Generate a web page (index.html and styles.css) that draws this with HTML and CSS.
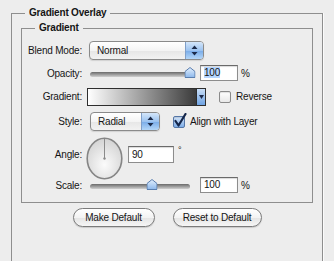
FILE: index.html
```html
<!DOCTYPE html>
<html lang="en">
<head>
  <meta charset="UTF-8">
  <title>Gradient Overlay</title>
  <link rel="stylesheet" href="styles.css">
</head>
<body>
  <fieldset class="group">
    <legend class="group-title">Gradient Overlay</legend>

    <fieldset class="panel">
      <legend class="panel-title">Gradient</legend>

      <div class="row row-blend">
        <span class="label">Blend Mode:</span>
        <div class="select select-blend">
          <span class="select-text">Normal</span>
          <span class="stepper">
            <svg width="7" height="11" viewBox="0 0 7 11"><path d="M3.5 0.5 L6.5 4 L0.5 4 Z M0.5 7 L6.5 7 L3.5 10.5 Z" fill="#1c2b4a"/></svg>
          </span>
        </div>
      </div>

      <div class="row row-opacity">
        <span class="label">Opacity:</span>
        <div class="slider">
          <div class="track"></div>
          <svg class="thumb" style="left: 100%" width="11" height="11" viewBox="0 0 11 11">
            <defs>
              <linearGradient id="th1" x1="0" y1="0" x2="0" y2="1">
                <stop offset="0" stop-color="#e4f0fd"/>
                <stop offset="1" stop-color="#8cb8ec"/>
              </linearGradient>
            </defs>
            <path d="M5.5 0.5 L10.5 4.5 L10.5 10.5 L0.5 10.5 L0.5 4.5 Z" fill="url(#th1)" stroke="#5a7eae"/>
          </svg>
        </div>
        <div class="field"><span class="picked">100</span></div>
        <span class="unit">%</span>
      </div>

      <div class="row row-gradient">
        <span class="label">Gradient:</span>
        <div class="ramp-box">
          <div class="ramp"></div>
          <div class="ramp-arrow">
            <svg width="5" height="4" viewBox="0 0 5 4"><path d="M0 0 L5 0 L2.5 4 Z" fill="#1c2b4a"/></svg>
          </div>
        </div>
        <span class="check check-reverse"></span>
        <span class="check-text">Reverse</span>
      </div>

      <div class="row row-style">
        <span class="label">Style:</span>
        <div class="select select-style">
          <span class="select-text">Radial</span>
          <span class="stepper">
            <svg width="7" height="11" viewBox="0 0 7 11"><path d="M3.5 0.5 L6.5 4 L0.5 4 Z M0.5 7 L6.5 7 L3.5 10.5 Z" fill="#1c2b4a"/></svg>
          </span>
        </div>
        <span class="check check-on">
          <svg class="tick" width="14" height="15" viewBox="0 0 14 15"><path d="M2.5 8 L5.5 12.5 L12.5 1" fill="none" stroke="#15264a" stroke-width="2.2" stroke-linecap="round" stroke-linejoin="round"/></svg>
        </span>
        <span class="check-text">Align with Layer</span>
      </div>

      <div class="row row-angle">
        <span class="label">Angle:</span>
        <svg class="dial" width="37" height="43" viewBox="0 0 37 43">
          <defs>
            <radialGradient id="dg" cx="0.5" cy="0.65" r="0.6">
              <stop offset="0" stop-color="#fbfbfb"/>
              <stop offset="1" stop-color="#d6d6d6"/>
            </radialGradient>
          </defs>
          <ellipse cx="18.5" cy="21.5" rx="17.3" ry="20.3" fill="url(#dg)" stroke="#858585" stroke-width="1.6"/>
          <line x1="18.5" y1="21.5" x2="18.5" y2="2" stroke="#8a8a8a" stroke-width="1"/>
          <circle cx="18.5" cy="21.5" r="1.2" fill="#8a8a8a"/>
        </svg>
        <div class="field field-angle">90</div>
        <span class="degree">°</span>
      </div>

      <div class="row row-scale">
        <span class="label">Scale:</span>
        <div class="slider">
          <div class="track"></div>
          <svg class="thumb" style="left: 62%" width="11" height="11" viewBox="0 0 11 11">
            <defs>
              <linearGradient id="th2" x1="0" y1="0" x2="0" y2="1">
                <stop offset="0" stop-color="#e4f0fd"/>
                <stop offset="1" stop-color="#8cb8ec"/>
              </linearGradient>
            </defs>
            <path d="M5.5 0.5 L10.5 4.5 L10.5 10.5 L0.5 10.5 L0.5 4.5 Z" fill="url(#th2)" stroke="#5a7eae"/>
          </svg>
        </div>
        <div class="field">100</div>
        <span class="unit">%</span>
      </div>
    </fieldset>

    <div class="buttons">
      <button class="pill pill-make">Make Default</button>
      <button class="pill pill-reset">Reset to Default</button>
    </div>
  </fieldset>
</body>
</html>
```

FILE: styles.css
```css
html, body {
  height: 261px;
  overflow: hidden;
}

body {
  margin: 0;
  padding-top: 7px;
  box-sizing: border-box;
  background: #ededed;
  font-family: 'Liberation Sans', Arial, sans-serif;
  font-size: 10px;
  letter-spacing: -0.2px;
  color: #151515;
}

.group {
  margin: 0 0 0 11px;
  padding: 0;
  width: 312px;
  min-width: 0;
  height: 254px;
  box-sizing: border-box;
  border: 1px solid #8e8e8e;
  border-bottom: none;
  box-shadow: 1px 0 0 #fbfbfb;
}

.group-title,
.panel-title {
  margin-left: 13px;
  padding: 0 4px;
  font-weight: bold;
  line-height: 12px;
}

.panel {
  margin: 3px 0 0 9px;
  padding: 6px 0 9px;
  width: 292px;
  min-width: 0;
  box-sizing: border-box;
  border: 1px solid #8e8e8e;
}

.row {
  display: flex;
  align-items: center;
}

.row-blend { height: 21px; }
.row-opacity { height: 20px; margin-top: 2px; }
.row-gradient { height: 19px; margin-top: 4px; }
.row-style { height: 19px; margin-top: 6px; }
.row-angle { height: 34px; margin-top: 6px; }
.row-scale { height: 16px; margin-top: 6px; }

.label {
  flex: none;
  width: 60px;
  margin-right: 8px;
  text-align: right;
}

/* popup menus */
.select {
  flex: none;
  display: flex;
  height: 19px;
  box-sizing: border-box;
  border: 1px solid #8a8a8a;
  border-radius: 4px;
  overflow: hidden;
  background: linear-gradient(#ffffff, #f4f4f4 50%, #e6e6e6 51%, #f2f2f2);
  box-shadow: 0 1px 1px rgba(0,0,0,0.12);
}

.select-blend {
  width: 115px;
  margin-left: -1px;
}

.select-style {
  width: 70px;
}

.select-text {
  flex: 1;
  padding-left: 7px;
  line-height: 17px;
}

.stepper {
  width: 17px;
  display: flex;
  align-items: center;
  justify-content: center;
  border-left: 1px solid #7f9fc9;
  background: linear-gradient(#d4e6fa, #9cc3f0 50%, #78abe8 51%, #b3d6f8);
}

/* sliders */
.slider {
  flex: none;
  position: relative;
  width: 100px;
  height: 11px;
  display: flex;
  align-items: center;
}

.track {
  width: 100%;
  height: 5px;
  margin-top: 2px;
  border-radius: 3px;
  background: linear-gradient(#6a6a6a, #a6a6a6 60%, #d0d0d0);
}

.thumb {
  position: absolute;
  top: -1px;
  transform: translateX(-50%);
}

/* text fields */
.field {
  flex: none;
  width: 38px;
  height: 16px;
  margin-left: 10px;
  padding-left: 3px;
  box-sizing: border-box;
  border: 1px solid #8d8d8d;
  border-top-color: #6a6a6a;
  background: #fff;
  box-shadow: inset 0 1px 1px rgba(0,0,0,0.15);
  line-height: 14px;
}

.field-angle {
  width: 46px;
  height: 17px;
  margin-left: 5px;
  line-height: 15px;
}

.picked {
  background: #b5d5ff;
}

.unit {
  margin-left: 3px;
}

.degree {
  align-self: flex-start;
  margin: 8px 0 0 4px;
  font-size: 9px;
}

/* gradient swatch */
.ramp-box {
  flex: none;
  display: flex;
  width: 119px;
  height: 18px;
  margin-left: -3px;
  box-sizing: border-box;
  border: 1px solid #2e2e2e;
}

.ramp {
  flex: 1;
  background: linear-gradient(to right, #ffffff, #3b3b3b);
}

.ramp-arrow {
  width: 8px;
  display: flex;
  align-items: center;
  justify-content: center;
  border-left: 1px solid #2e2e2e;
  background: linear-gradient(#c9def7, #6fa3e3);
}

/* checkboxes */
.check {
  flex: none;
  position: relative;
  width: 12px;
  height: 12px;
  box-sizing: border-box;
  border: 1px solid #8a8a8a;
  border-radius: 2px;
  background: linear-gradient(#ffffff, #e8e8e8);
  box-shadow: inset 0 1px 1px rgba(0,0,0,0.12);
}

.check-reverse {
  margin-left: 13px;
}

.check-on {
  margin-left: 13px;
  border-color: #5576a6;
  background: linear-gradient(#d3e5fa, #7eaee8);
}

.tick {
  position: absolute;
  left: -1px;
  top: -4px;
}

.check-text {
  margin-left: 5px;
}

/* angle dial */
.dial {
  flex: none;
  align-self: flex-start;
  margin-left: -4px;
}

/* bottom buttons */
.buttons {
  display: flex;
  justify-content: center;
  gap: 18px;
  margin-top: 5px;
}

.pill {
  height: 19px;
  padding: 0;
  font: inherit;
  letter-spacing: inherit;
  color: #151515;
  border: 1px solid #7b7b7b;
  border-radius: 10px;
  background: linear-gradient(#ffffff, #f3f3f3 50%, #e4e4e4 51%, #f6f6f6);
  box-shadow: 0 1px 1px rgba(0,0,0,0.15);
}

.pill-make { width: 82px; }
.pill-reset { width: 89px; }
```
